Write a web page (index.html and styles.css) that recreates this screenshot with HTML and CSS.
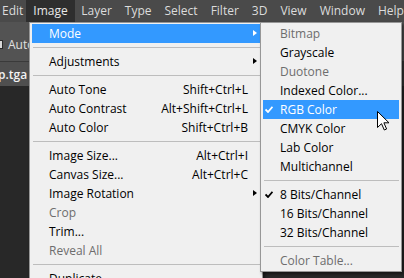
FILE: index.html
```html
<!DOCTYPE html>
<html lang="en">
<head>
  <meta charset="UTF-8" />
  <title>Image Menu</title>
  <link rel="stylesheet" href="styles.css">
</head>
<body>

  <nav class="menubar">
    <span class="menu-title first">Edit</span>
    <span class="menu-title open">Image</span>
    <span class="menu-title">Layer</span>
    <span class="menu-title">Type</span>
    <span class="menu-title">Select</span>
    <span class="menu-title">Filter</span>
    <span class="menu-title">3D</span>
    <span class="menu-title">View</span>
    <span class="menu-title">Window</span>
    <span class="menu-title">Help</span>
  </nav>

  <div class="options">
    <span class="checkbox"></span>
    <span class="opt-label">Auto-</span>
  </div>

  <div class="tabs">
    <span class="tab">p.tga</span>
  </div>

  <div class="workspace"></div>

  <!-- Image menu -->
  <ul class="dropdown main-menu">
    <li class="item has-sub hover"><span class="label">Mode</span><span class="arrow"></span></li>
    <li class="sep"></li>
    <li class="item has-sub"><span class="label">Adjustments</span><span class="arrow"></span></li>
    <li class="sep"></li>
    <li class="item"><span class="label">Auto Tone</span><span class="key">Shift+Ctrl+L</span></li>
    <li class="item"><span class="label">Auto Contrast</span><span class="key">Alt+Shift+Ctrl+L</span></li>
    <li class="item"><span class="label">Auto Color</span><span class="key">Shift+Ctrl+B</span></li>
    <li class="sep"></li>
    <li class="item"><span class="label">Image Size...</span><span class="key">Alt+Ctrl+I</span></li>
    <li class="item"><span class="label">Canvas Size...</span><span class="key">Alt+Ctrl+C</span></li>
    <li class="item has-sub"><span class="label">Image Rotation</span><span class="arrow"></span></li>
    <li class="item disabled"><span class="label">Crop</span></li>
    <li class="item"><span class="label">Trim...</span></li>
    <li class="item disabled"><span class="label">Reveal All</span></li>
    <li class="sep"></li>
    <li class="item"><span class="label">Duplicate...</span></li>
  </ul>

  <!-- Mode submenu -->
  <ul class="dropdown sub-menu">
    <li class="item disabled"><span class="label">Bitmap</span></li>
    <li class="item"><span class="label">Grayscale</span></li>
    <li class="item disabled"><span class="label">Duotone</span></li>
    <li class="item"><span class="label">Indexed Color...</span></li>
    <li class="item checked hover">
      <svg class="check" width="8" height="7" viewBox="0 0 8 7"><path d="M0.5 3.5 L3 6 L7.5 0.8" fill="none" stroke="currentColor" stroke-width="1.8"/></svg>
      <span class="label">RGB Color</span>
    </li>
    <li class="item"><span class="label">CMYK Color</span></li>
    <li class="item"><span class="label">Lab Color</span></li>
    <li class="item"><span class="label">Multichannel</span></li>
    <li class="sep"></li>
    <li class="item checked">
      <svg class="check" width="8" height="7" viewBox="0 0 8 7"><path d="M0.5 3.5 L3 6 L7.5 0.8" fill="none" stroke="currentColor" stroke-width="1.8"/></svg>
      <span class="label">8 Bits/Channel</span>
    </li>
    <li class="item"><span class="label">16 Bits/Channel</span></li>
    <li class="item"><span class="label">32 Bits/Channel</span></li>
    <li class="sep"></li>
    <li class="item disabled"><span class="label">Color Table...</span></li>
  </ul>

  <!-- mouse pointer -->
  <svg class="cursor" width="13" height="20" viewBox="0 0 13 20">
    <path d="M0.5 0.5 L0.5 16.5 L4.5 12.7 L7.3 19 L9.6 18 L6.9 11.8 L12 11.8 Z" fill="#fff" stroke="#000" stroke-width="1"/>
  </svg>

</body>
</html>
```

FILE: styles.css
```css
* {
  box-sizing: border-box;
}

body {
  margin: 0;
  width: 404px;
  height: 278px;
  overflow: hidden;
  position: relative;
  font-family: 'Open Sans', sans-serif;
  font-size: 12px;
  background: #282828;
}

/* Top menu bar */
.menubar {
  display: flex;
  height: 22px;
  background: #4a4a4a;
  color: #dcdcdc;
  white-space: nowrap;
}

.menu-title {
  padding: 0 6.5px;
  line-height: 22px;
}

.menu-title.first {
  margin-left: -4.5px;
  padding-right: 3px;
}

.menu-title.open {
  background: #2e2e2e;
  color: #e8e8e8;
  padding: 0 7px;
}

/* Options bar */
.options {
  display: flex;
  align-items: center;
  height: 40px;
  background: #535353;
  border-bottom: 1px solid #3a3a3a;
  color: #e0e0e0;
  padding-top: 6px;
}

.checkbox {
  width: 10px;
  height: 9px;
  margin-left: -7px;
  background: #d8d8d8;
  border: 1px solid #2a2a2a;
}

.opt-label {
  margin-left: 5px;
}

.tabs {
  height: 24px;
  background: #3a3a3a;
  display: flex;
}

.tab {
  width: 29px;
  padding-top: 2px;
  background: #4f4f4f;
  color: #f2f2f2;
  font-weight: 600;
  line-height: 22px;
  text-indent: -2px;
  overflow: hidden;
  white-space: nowrap;
}

.workspace {
  height: 200px;
  background: #282828;
}

/* Dropdown menus */
.dropdown {
  position: absolute;
  top: 22px;
  margin: 0;
  padding: 1px 2px;
  list-style: none;
  background: #f0f0f0;
  border: 1px solid #979797;
  color: #000;
  box-shadow: 2px 2px 3px rgba(0, 0, 0, 0.5);
}

.main-menu {
  left: 29px;
  width: 234px;
}

.sub-menu {
  left: 260px;
  width: 142px;
}

.item {
  position: relative;
  display: flex;
  align-items: center;
  height: 19px;
  padding: 0 12px 0 17px;
  white-space: nowrap;
}

.item .label {
  flex: 1;
}

.item.disabled {
  color: #6d6d6d;
}

.item.hover {
  background: #3399ff;
  color: #fff;
}

.arrow {
  position: absolute;
  right: 3px;
  top: 6px;
  border-left: 4px solid currentColor;
  border-top: 3.5px solid transparent;
  border-bottom: 3.5px solid transparent;
}

.check {
  position: absolute;
  left: 2px;
  top: 6px;
}

.sep {
  height: 1px;
  margin: 4px 0 4px 1px;
  background: #bdbdbd;
}

.cursor {
  position: absolute;
  left: 377px;
  top: 111px;
}
```
